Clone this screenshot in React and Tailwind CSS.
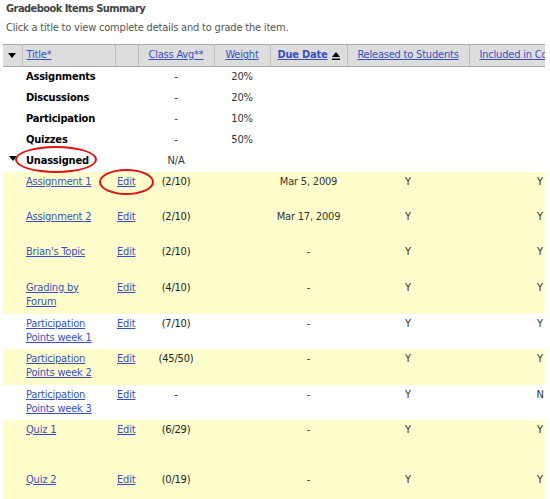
import React from "react";

const cats = [
  { name: "Assignments", avg: "-", weight: "20%" },
  { name: "Discussions", avg: "-", weight: "20%" },
  { name: "Participation", avg: "-", weight: "10%" },
  { name: "Quizzes", avg: "-", weight: "50%" },
];

const items = [
  { t: ["Assignment 1"], avg: "(2/10)", due: "Mar 5, 2009", rel: "Y", inc: "Y", hl: true, h: "h-[35px]" },
  { t: ["Assignment 2"], avg: "(2/10)", due: "Mar 17, 2009", rel: "Y", inc: "Y", hl: true, h: "h-[35px]" },
  { t: ["Brian's Topic"], avg: "(2/10)", due: "-", rel: "Y", inc: "Y", hl: true, h: "h-[36px]" },
  { t: ["Grading by", "Forum"], avg: "(4/10)", due: "-", rel: "Y", inc: "Y", hl: true, h: "h-[36px]" },
  { t: ["Participation", "Points week 1"], avg: "(7/10)", due: "-", rel: "Y", inc: "Y", hl: false, h: "h-[35px]" },
  { t: ["Participation", "Points week 2"], avg: "(45/50)", due: "-", rel: "Y", inc: "Y", hl: true, h: "h-[36px]" },
  { t: ["Participation", "Points week 3"], avg: "-", due: "-", rel: "Y", inc: "N", hl: false, h: "h-[35px]" },
  { t: ["Quiz 1"], avg: "(6/29)", due: "-", rel: "Y", inc: "Y", hl: true, h: "h-[50px]" },
  { t: ["Quiz 2"], avg: "(0/19)", due: "-", rel: "Y", inc: "Y", hl: true, h: "h-[40px]" },
];

const link = "text-[#3552c0] underline";

function DownTri({ className }) {
  return (
    <svg width="8" height="5" viewBox="0 0 8 5" className={className}>
      <polygon points="0,0 8,0 4,5" fill="#000" />
    </svg>
  );
}

export default function App() {
  return (
    <div
      className="relative w-[550px] h-[499px] overflow-hidden bg-white text-[11px] tracking-[-0.2px] text-[#222]"
      style={{ fontFamily: 'Tahoma, "DejaVu Sans Condensed", "DejaVu Sans", sans-serif' }}
    >
      <div className="pl-[6px] pt-[2px] font-bold tracking-[-0.55px] text-[#444] leading-[14px]">Gradebook Items Summary</div>
      <div className="pl-[6px] pt-[5px] text-[#555] leading-[14px]">
        Click a title to view complete details and to grade the item.
      </div>
      <div className="ml-[3px] mt-[9px] w-[542px] overflow-hidden">
        <table className="table-fixed border-collapse w-[608px]">
          <colgroup>
            <col className="w-[19px]" />
            <col className="w-[93px]" />
            <col className="w-[23px]" />
            <col className="w-[76px]" />
            <col className="w-[56px]" />
            <col className="w-[77px]" />
            <col className="w-[122px]" />
            <col className="w-[142px]" />
          </colgroup>
          <thead>
            <tr className="h-[22px] bg-[#dddddd] border-y border-[#a8a8a8]">
              <th className="border-r border-[#bbbbbb] p-0">
                <div className="flex justify-center"><DownTri /></div>
              </th>
              <th className="border-r border-[#bbbbbb] text-left font-normal pl-[4px]">
                <span className={link}>Title*</span>
              </th>
              <th className="border-r border-[#bbbbbb]"></th>
              <th className="border-r border-[#bbbbbb] font-normal text-center">
                <span className={link}>Class Avg**</span>
              </th>
              <th className="border-r border-[#bbbbbb] font-normal text-center">
                <span className={link}>Weight</span>
              </th>
              <th className="border-r border-[#bbbbbb] text-center font-bold">
                <span className="inline-flex items-center gap-[4px]">
                  <span className={link}>Due Date</span>
                  <svg width="8" height="8" viewBox="0 0 8 8">
                    <polygon points="4,0 8,5 0,5" fill="#000" />
                    <rect x="0" y="6.5" width="8" height="1.5" fill="#000" />
                  </svg>
                </span>
              </th>
              <th className="border-r border-[#bbbbbb] font-normal text-center">
                <span className={link}>Released to Students</span>
              </th>
              <th className="font-normal text-left pl-[10px] whitespace-nowrap overflow-hidden">
                <span className={link}>Included in Course Grade</span>
              </th>
            </tr>
          </thead>
          <tbody>
            {cats.map((c) => (
              <tr key={c.name} className="h-[21px]">
                <td></td>
                <td colSpan={2} className="pl-[4px] font-bold text-black">{c.name}</td>
                <td className="text-center text-[#333]">{c.avg}</td>
                <td className="text-center text-[#333]">{c.weight}</td>
                <td></td>
                <td></td>
                <td></td>
              </tr>
            ))}
            <tr className="h-[21px]">
              <td className="p-0">
                <div className="flex justify-center pb-[5px]"><DownTri /></div>
              </td>
              <td colSpan={2} className="pl-[4px] font-bold text-black">Unassigned</td>
              <td className="text-center text-[#333]">N/A</td>
              <td></td>
              <td></td>
              <td></td>
              <td></td>
            </tr>
            {items.map((it, i) => (
              <tr key={i} className={`${it.h} align-top leading-[14px] ${it.hl ? "bg-[#fffdcb]" : "bg-white"}`}>
                <td></td>
                <td className="pl-[4px] pt-[3px]">
                  {it.t.map((l, j) => (
                    <div key={j}><span className={link}>{l}</span></div>
                  ))}
                </td>
                <td className="pt-[3px] pl-[2px]"><span className={link}>Edit</span></td>
                <td className="pt-[3px] text-center text-[#222]">{it.avg}</td>
                <td></td>
                <td className="pt-[3px] text-center text-[#333]">{it.due}</td>
                <td className="pt-[3px] text-center text-[#333]">{it.rel}</td>
                <td className="pt-[3px] text-center text-[#333]">{it.inc}</td>
              </tr>
            ))}
          </tbody>
        </table>
      </div>
      <div className="absolute left-[15px] top-[146px] w-[82px] h-[27px] rounded-[50%] border-2 border-[#e01010]"></div>
      <div className="absolute left-[99px] top-[169px] w-[55px] h-[26px] rounded-[50%] border-2 border-[#e01010]"></div>
    </div>
  );
}
